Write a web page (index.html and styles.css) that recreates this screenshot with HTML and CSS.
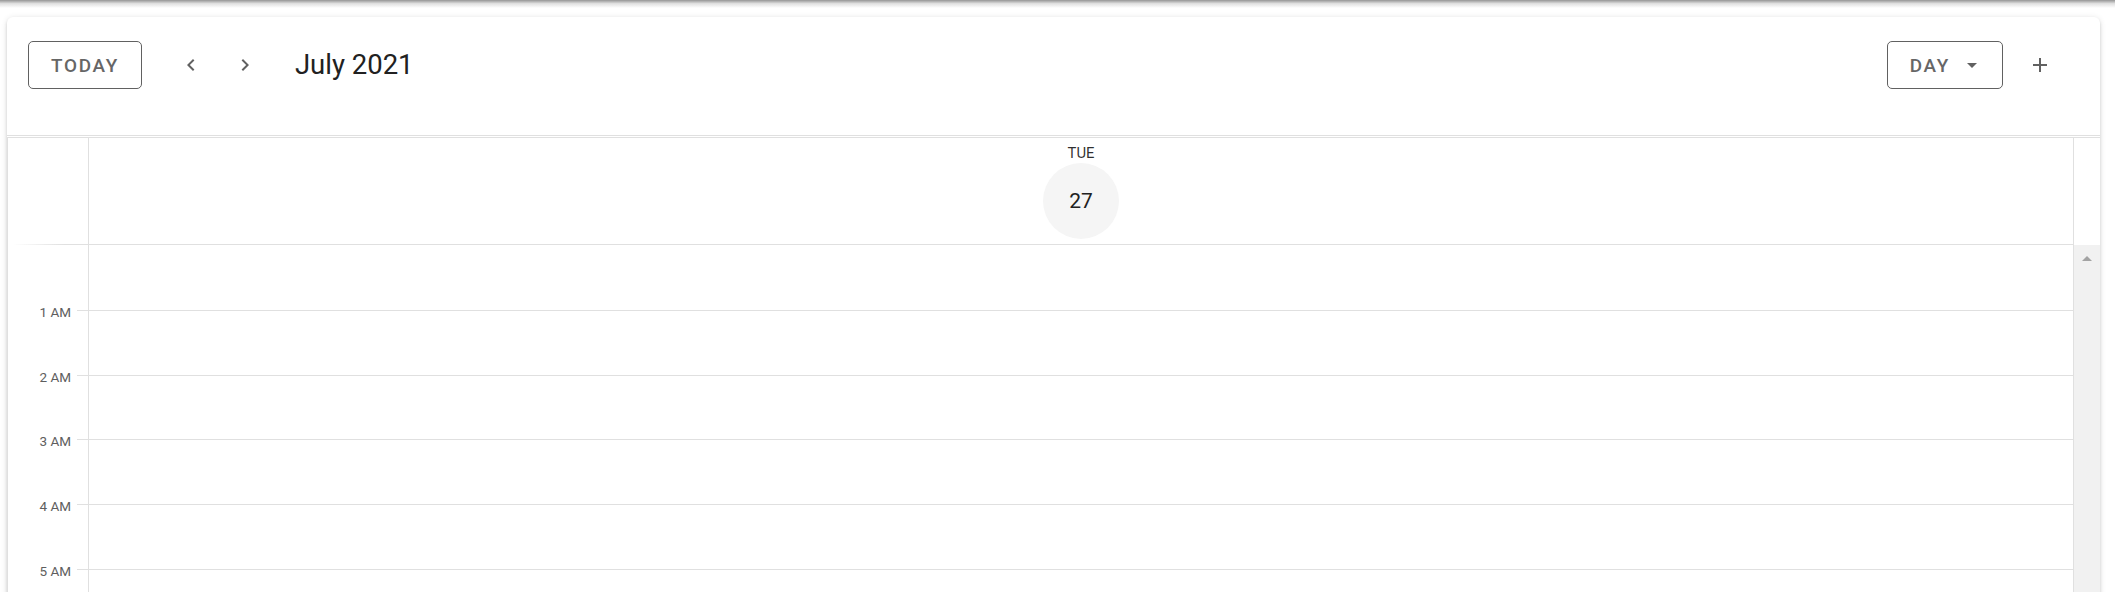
FILE: index.html
```html
<!DOCTYPE html>
<html lang="en">
<head>
<meta charset="utf-8">
<title>Calendar – Day view</title>
<link rel="stylesheet" href="styles.css">
</head>
<body>
<div class="top-shadow"></div>
<main class="page">
  <section class="card">
    <header class="toolbar">
      <div class="toolbar-row">
        <button class="btn-outline btn-today">TODAY</button>
        <button class="btn-icon" aria-label="Previous">
          <svg viewBox="0 0 24 24" width="24" height="24"><path d="M15.41,16.58L10.83,12L15.41,7.41L14,6L8,12L14,18L15.41,16.58Z"/></svg>
        </button>
        <button class="btn-icon" aria-label="Next">
          <svg viewBox="0 0 24 24" width="24" height="24"><path d="M8.59,16.58L13.17,12L8.59,7.41L10,6L16,12L10,18L8.59,16.58Z"/></svg>
        </button>
        <div class="title">July 2021</div>
        <div class="spacer"></div>
        <button class="btn-outline btn-day">DAY
          <svg class="menu-down" viewBox="0 0 24 24" width="24" height="24"><path d="M7,10L12,15L17,10H7Z"/></svg>
        </button>
        <button class="btn-icon btn-plus" aria-label="Add event">
          <svg viewBox="0 0 24 24" width="24" height="24"><path d="M19,13H13V19H11V13H5V11H11V5H13V11H19V13Z"/></svg>
        </button>
      </div>
    </header>

    <div class="calendar">
      <div class="cal-head">
        <div class="head-time"></div>
        <div class="head-day">
          <div class="weekday">TUE</div>
          <div class="daynum">27</div>
        </div>
        <div class="head-spacer"></div>
      </div>

      <div class="cal-body">
        <div class="time-col">
          <div class="t-int"></div>
          <div class="t-int"><span class="t-label">1 AM</span><i class="tick"></i></div>
          <div class="t-int"><span class="t-label">2 AM</span><i class="tick"></i></div>
          <div class="t-int"><span class="t-label">3 AM</span><i class="tick"></i></div>
          <div class="t-int"><span class="t-label">4 AM</span><i class="tick"></i></div>
          <div class="t-int"><span class="t-label">5 AM</span><i class="tick"></i></div>
        </div>
        <div class="day-col">
          <div class="d-int"></div>
          <div class="d-int"></div>
          <div class="d-int"></div>
          <div class="d-int"></div>
          <div class="d-int"></div>
          <div class="d-int"></div>
        </div>
        <div class="scrollbar"><span class="sb-arrow"></span></div>
      </div>
    </div>
  </section>
</main>
</body>
</html>
```

FILE: styles.css
```css
html, body {
  margin: 0;
  padding: 0;
  height: 592px;
  overflow: hidden;
  background: #ffffff;
  font-family: Roboto, "Noto Sans", "Liberation Sans", sans-serif;
  color: rgba(0, 0, 0, 0.87);
}

.top-shadow {
  height: 8px;
  background: linear-gradient(to bottom, rgba(0, 0, 0, 0.42), rgba(0, 0, 0, 0.12) 45%, rgba(0, 0, 0, 0));
}

.page {
  padding: 9px 15px 0 7px;
}

.card {
  background: #fff;
  border-radius: 6px 6px 0 0;
  box-shadow: 0 3px 2px -2px rgba(0, 0, 0, 0.2), 0 2px 3px 0 rgba(0, 0, 0, 0.14), 0 1px 6px 0 rgba(0, 0, 0, 0.12);
}

/* ---------- toolbar ---------- */
.toolbar {
  box-sizing: border-box;
  height: 119px;
  padding: 24px 33px 0 21px;
  border-bottom: 1px solid #e0e0e0;
}

.toolbar-row {
  height: 48px;
  display: flex;
  align-items: center;
}

.btn-outline {
  box-sizing: border-box;
  height: 48px;
  padding: 0 22px;
  display: inline-flex;
  align-items: center;
  background: #fff;
  border: 1px solid #616161;
  border-radius: 5px;
  color: #666666;
  font-family: Roboto, "Liberation Sans", sans-serif;
  font-weight: 500;
  font-size: 18.9px;
  letter-spacing: 1.69px;
  cursor: pointer;
}

.btn-today {
  margin-right: 22px;
}

.btn-day {
  padding-right: 18px;
}

.menu-down {
  margin-left: 10px;
  fill: #616161;
}

.btn-icon {
  width: 54px;
  height: 48px;
  padding: 0;
  border: 0;
  background: transparent;
  display: inline-flex;
  align-items: center;
  justify-content: center;
  cursor: pointer;
}

.btn-icon svg {
  fill: #616161;
}

.btn-plus {
  margin-left: 10px;
}

.title {
  margin-left: 23px;
  font-size: 27.5px;
  font-weight: 400;
  color: #212121;
  line-height: 1.5;
}

.spacer {
  flex: 1;
}

/* ---------- calendar ---------- */
.calendar {
  margin-top: 1px;
  border-top: 1px solid #e0e0e0;
  border-left: 1px solid #e0e0e0;
}

.cal-head {
  display: flex;
  height: 107px;
}

.head-time {
  box-sizing: border-box;
  width: 81px;
  border-right: 1px solid #e0e0e0;
  background: linear-gradient(to right, rgba(224, 224, 224, 0) 6%, #e0e0e0 70%) no-repeat left bottom / 100% 1px;
}

.head-day {
  flex: 1;
  box-sizing: border-box;
  border-right: 1px solid #e0e0e0;
  border-bottom: 1px solid #e0e0e0;
  display: flex;
  flex-direction: column;
  align-items: center;
  padding-top: 7px;
}

.weekday {
  font-size: 14.85px;
  line-height: 17px;
  color: rgba(0, 0, 0, 0.82);
}

.daynum {
  margin-top: 1px;
  width: 76px;
  height: 76px;
  border-radius: 50%;
  background: #f5f5f5;
  display: flex;
  align-items: center;
  justify-content: center;
  font-size: 21px;
  color: #212121;
}

.head-spacer {
  width: 26px;
}

.cal-body {
  display: flex;
}

.time-col {
  box-sizing: border-box;
  width: 81px;
  border-right: 1px solid #e0e0e0;
}

.t-int {
  height: 64.8px;
  display: flex;
  justify-content: flex-end;
  align-items: flex-start;
}

.t-label {
  font-size: 13.5px;
  line-height: 1;
  margin-top: -4px;
  padding-right: 6px;
  color: #5e5e5e;
  white-space: nowrap;
}

.tick {
  display: block;
  width: 11px;
  height: 1px;
  background: #e0e0e0;
}

.day-col {
  flex: 1;
  border-right: 1px solid #e0e0e0;
}

.d-int {
  box-sizing: border-box;
  height: 64.8px;
  border-top: 1px solid #e0e0e0;
}

.d-int:first-child {
  border-top: 0;
}

.scrollbar {
  width: 26px;
  background: #f1f1f1;
  display: flex;
  flex-direction: column;
  align-items: center;
  padding-top: 11px;
}

.sb-arrow {
  display: block;
  width: 0;
  height: 0;
  border-left: 5.5px solid transparent;
  border-right: 5.5px solid transparent;
  border-bottom: 5px solid #a3a3a3;
}
```
